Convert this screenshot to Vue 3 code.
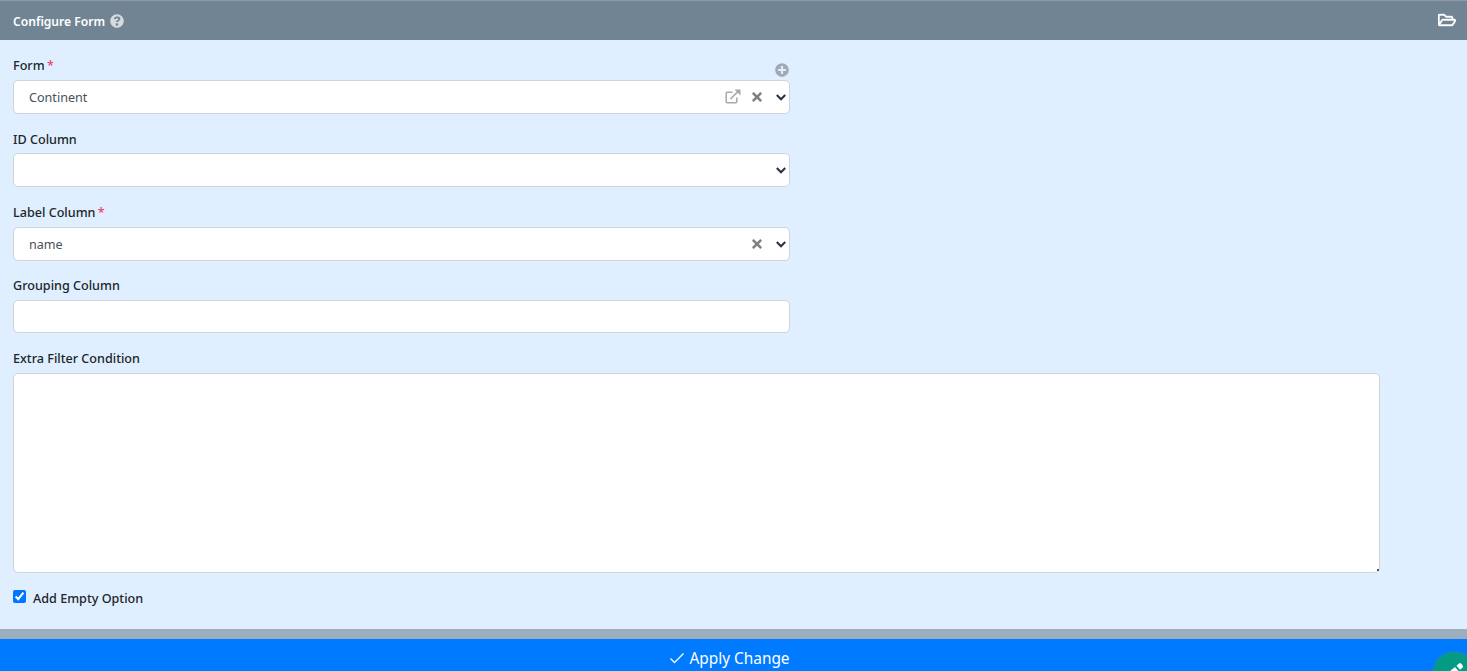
<script setup>
const fields = [
  { label: 'Form', required: true, value: 'Continent', options: ['Continent'], clear: true, open: true, add: true },
  { label: 'ID Column', value: '', options: [''] },
  { label: 'Label Column', required: true, value: 'name', options: ['name'], clear: true },
]
</script>

<template>
  <div class="page">
    <header class="head">
      <div class="title">
        <span>Configure Form</span>
        <svg class="help" viewBox="0 0 512 512" width="14" height="14"><path fill="#d4dade" d="M504 256c0 137-111 248-248 248S8 393 8 256 119 8 256 8s248 111 248 248zM262.700 90c-54.500 0-89.300 23-116.500 63.800-3.500 5.300-2.400 12.400 2.700 16.300l34.700 26.300c5.200 3.900 12.600 3 16.700-2.100 17.900-22.700 30.100-35.800 57.300-35.800 20.400 0 45.700 13.100 45.700 33 0 15-12.400 22.700-32.600 34-23.600 13.200-54.800 29.700-54.800 70.900V280c0 6.600 5.400 12 12 12h56c6.600 0 12-5.400 12-12v-1.300c0-28.600 83.500-29.800 83.500-107.100C379.900 113.400 319.400 90 262.700 90zM256 339c-25.500 0-46.200 20.700-46.200 46.200 0 25.500 20.700 46.200 46.200 46.200s46.200-20.700 46.200-46.200c0-25.500-20.700-46.200-46.200-46.200z"/></svg>
      </div>
      <svg class="folder" viewBox="0 0 576 512" width="18" height="16"><path fill="#fff" stroke="#fff" stroke-width="14" d="M527.900 224H480v-48c0-26.500-21.500-48-48-48H272l-64-64H48C21.500 64 0 85.500 0 112v288c0 26.500 21.500 48 48 48h400c16.500 0 31.900-8.500 40.700-22.600l79.900-128c20-31.900-3-73.400-40.700-73.400zM48 118c0-3.300 2.700-6 6-6h134.100l64 64H426c3.300 0 6 2.700 6 6v42H152c-16.800 0-32.400 8.800-41.100 23.300L48 351.800V118zm400 282H72l77.200-128H528l-80 128z"/></svg>
    </header>

    <main class="body">
      <div v-for="f in fields" :key="f.label" class="field">
        <label class="label">{{ f.label }}<span v-if="f.required" class="req"> *</span></label>
        <svg v-if="f.add" class="add" viewBox="0 0 512 512" width="14" height="14"><path fill="#a0a9b4" d="M256 8C119 8 8 119 8 256s111 248 248 248 248-111 248-248S393 8 256 8zm144 276c0 6.600-5.400 12-12 12h-92v92c0 6.600-5.400 12-12 12h-56c-6.600 0-12-5.400-12-12v-92h-92c-6.600 0-12-5.400-12-12v-56c0-6.600 5.400-12 12-12h92v-92c0-6.600 5.400-12 12-12h56c6.600 0 12 5.400 12 12v92h92c6.600 0 12 5.400 12 12v56z"/></svg>
        <div class="control">
          <select class="select" :value="f.value">
            <option v-for="o in f.options" :key="o" :value="o">{{ o }}</option>
          </select>
          <svg class="chev" viewBox="0 0 10 7" width="10" height="7"><path fill="none" stroke="#27343f" stroke-width="2" d="M.8 1 5 5.300 9.200 1"/></svg>
          <svg v-if="f.open" class="open" viewBox="0 0 16 15" width="16" height="15"><path fill="none" stroke="#a9a9a9" stroke-width="1.500" d="M7.500 3.200H2.200a1 1 0 0 0-1 1v8.600a1 1 0 0 0 1 1h8.600a1 1 0 0 0 1-1V8.500"/><path fill="none" stroke="#a9a9a9" stroke-width="1.700" d="M5.500 10 13.500 2"/><path fill="#a9a9a9" d="M9.500 .5H15.500V6.500z"/></svg>
          <svg v-if="f.clear" class="clear" viewBox="0 0 352 512" width="10" height="14"><path fill="#808080" d="M242.700 256l100.100-100.100c12.300-12.300 12.300-32.200 0-44.500l-22.200-22.200c-12.300-12.300-32.200-12.300-44.500 0L176 189.300 75.900 89.200c-12.300-12.300-32.200-12.300-44.500 0L9.200 111.400c-12.300 12.300-12.300 32.200 0 44.500L109.300 256 9.200 356.100c-12.300 12.300-12.300 32.200 0 44.500l22.200 22.200c12.300 12.300 32.200 12.300 44.500 0L176 322.700l100.100 100.100c12.300 12.300 32.200 12.300 44.500 0l22.200-22.200c12.300-12.300 12.300-32.200 0-44.500L242.700 256z"/></svg>
        </div>
      </div>

      <div class="field">
        <label class="label lower">Grouping Column</label>
        <div class="control"><input class="input" type="text" /></div>
      </div>

      <div class="field wide">
        <label class="label upper">Extra Filter Condition</label>
        <div class="area-wrap">
          <textarea class="area"></textarea>
          <span class="grip"></span>
        </div>
      </div>

      <label class="check">
        <input type="checkbox" checked />
        <span>Add Empty Option</span>
      </label>
    </main>

    <div class="divider"></div>
    <button class="apply" type="button">
      <svg viewBox="0 0 16 16" width="16" height="16"><path fill="none" stroke="#fff" stroke-width="1.300" d="M1.500 8.500 5.500 12.500 14.500 3.500"/></svg>
      <span>Apply Change</span>
    </button>

    <div class="fab">
      <svg viewBox="0 0 24 24" width="24" height="24"><path fill="#fff" d="M1 19 12 10l3.500 4L5 24H1z"/><path fill="#fff" d="M13.500 8.700 16 6.500a1.500 1.500 0 0 1 2 .1l1.700 2a1.500 1.500 0 0 1-.1 2l-2.500 2.200z"/></svg>
    </div>
  </div>
</template>

<style>
html, body { margin: 0; overflow: hidden; }
</style>

<style scoped>
.page {
  position: relative;
  height: 671px;
  width: 1467px;
  overflow: hidden;
  display: flex;
  flex-direction: column;
  background: #dfefff;
  font-family: "Noto Sans", "Open Sans", sans-serif;
  font-size: 12.600px;
  color: #212529;
}
.head {
  height: 40px;
  box-sizing: border-box;
  flex: none;
  display: flex;
  align-items: center;
  justify-content: space-between;
  padding: 0 11px 0 13px;
  background: #708494;
  border-top: 1px solid #8a9aa8;
  color: #fff;
}
.title {
  display: flex;
  align-items: center;
  gap: 5px;
  padding-top: 1px;
  font-size: 12.100px;
  font-weight: 600;
}
.folder { margin-top: -1px; }
.body {
  flex: 1;
  padding: 15.300px 13px 0;
  display: flex;
  flex-direction: column;
  min-height: 0;
}
.field {
  position: relative;
  width: 777px;
  margin-bottom: 14.900px;
}
.field.wide { width: 1367px; margin-bottom: 0; }
.label {
  display: block;
  line-height: 21px;
  margin-bottom: 3.500px;
  font-weight: 500;
}
.label.lower { line-height: 22px; margin-bottom: 2.500px; }
.label.upper { line-height: 20px; margin-bottom: 4.500px; }
.req { color: #e8436a; word-spacing: -1px; }
.add { position: absolute; right: 1px; top: 8px; }
.control { position: relative; height: 34px; }
.select, .input {
  display: block;
  width: 100%;
  box-sizing: border-box;
  height: 34px;
  border: 1px solid #ced4da;
  border-radius: 5px;
  background: #fff;
  color: #495057;
  font: inherit;
  padding: 2px 4px 0 15px;
  outline: none;
  appearance: none;
}
.input { height: 33.400px; }
.chev { position: absolute; right: 4px; top: 14px; pointer-events: none; }
.open { position: absolute; right: 49px; top: 9px; }
.clear { position: absolute; right: 28px; top: 10px; }
.area-wrap { position: relative; }
.area {
  display: block;
  width: 100%;
  height: 200px;
  box-sizing: border-box;
  border: 1px solid #ced4da;
  border-radius: 5px;
  background: #fff;
  outline: none;
  resize: none;
}
.grip {
  position: absolute;
  right: 1px;
  bottom: 2px;
  width: 2px;
  height: 2px;
  background: #555;
}
.check {
  display: flex;
  align-items: center;
  gap: 7px;
  margin-top: 15.400px;
  line-height: 20px;
  font-weight: 500;
}
.check input {
  width: 13px;
  height: 13px;
  margin: -5px 0 0;
  accent-color: #0075ff;
}
.divider {
  flex: none;
  height: 10px;
  background: #9bafbe;
}
.apply {
  flex: none;
  height: 32px;
  border: 0;
  padding: 6px 8px 0 0;
  background: #007bff;
  color: #fff;
  display: flex;
  align-items: center;
  justify-content: center;
  gap: 4px;
  font: inherit;
  font-size: 15.400px;
}
.fab {
  position: absolute;
  left: 1433px;
  top: 652px;
  width: 42px;
  height: 42px;
  border-radius: 50%;
  background: #049b85;
  box-shadow: 0 0 2px #5a7f9a;
}
.fab svg { position: absolute; left: 10px; top: 5px; }
</style>
